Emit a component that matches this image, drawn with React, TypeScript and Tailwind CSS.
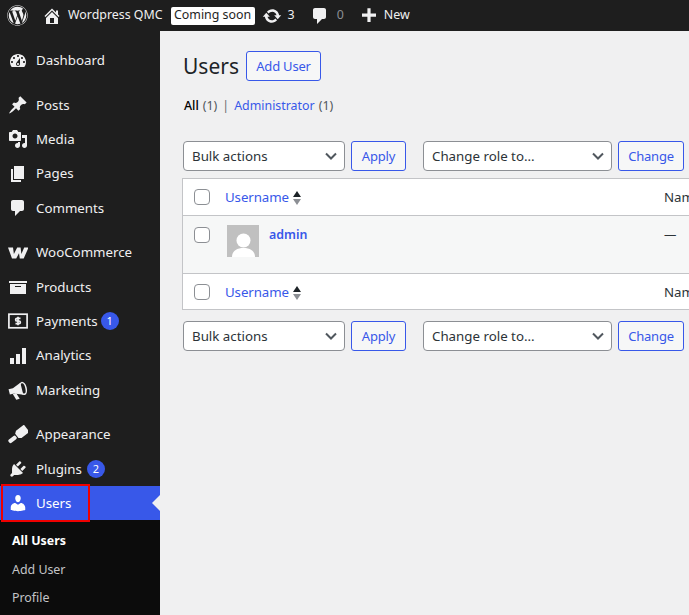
import React from "react";
import { FaWordpress } from "react-icons/fa";

const I = ({ d, className = "", children }: { d?: string; className?: string; children?: React.ReactNode }) => (
  <svg viewBox="0 0 20 20" className={`h-5 w-5 shrink-0 fill-current ${className}`}>
    {d ? <path d={d} /> : null}
    {children}
  </svg>
);

const P = {
  dashboard:
    "M3.76 16h12.48c1.1-1.37 1.76-3.11 1.76-5 0-4.42-3.58-8-8-8s-8 3.58-8 8c0 1.89.66 3.63 1.76 5zM10 4c.55 0 1 .45 1 1s-.45 1-1 1-1-.45-1-1 .45-1 1-1zM6 6c.55 0 1 .45 1 1s-.45 1-1 1-1-.45-1-1 .45-1 1-1zm8 0c.55 0 1 .45 1 1s-.45 1-1 1-1-.45-1-1 .45-1 1-1zm-5.37 5.55L12 7v6c0 1.1-.9 2-2 2s-2-.9-2-2c0-.57.24-1.08.63-1.45zM4 10c.55 0 1 .45 1 1s-.45 1-1 1-1-.45-1-1 .45-1 1-1zm12 0c.55 0 1 .45 1 1s-.45 1-1 1-1-.45-1-1 .45-1 1-1zm-5 3c0-.55-.45-1-1-1s-1 .45-1 1 .45 1 1 1 1-.45 1-1z",
  post: "M10.44 3.02l1.82-1.82 6.36 6.35-1.83 1.82c-1.05-.68-2.48-.57-3.41.36l-.75.75c-.92.93-1.04 2.35-.35 3.41l-1.83 1.82-2.41-2.41-2.8 2.79c-.42.42-3.38 2.71-3.8 2.29s1.86-3.39 2.28-3.81l2.79-2.79L4.1 9.36l1.83-1.82c1.05.69 2.48.57 3.4-.36l.75-.75c.93-.92 1.05-2.35.36-3.41z",
  media:
    "M13 11V4c0-.55-.45-1-1-1h-1.67L9 1H5L3.67 3H2c-.55 0-1 .45-1 1v7c0 .55.45 1 1 1h10c.55 0 1-.45 1-1zM7 4.5c1.38 0 2.5 1.12 2.5 2.5S8.38 9.5 7 9.5 4.5 8.38 4.5 7 5.62 4.5 7 4.5zM14 6h5v10.5c0 1.38-1.12 2.5-2.5 2.5S14 17.88 14 16.5s1.12-2.5 2.5-2.5c.17 0 .34.02.5.05V9h-3V6zm-4 8.05V13h2v3.5c0 1.38-1.12 2.5-2.5 2.5S7 17.88 7 16.5 8.12 14 9.5 14c.17 0 .34.02.5.05z",
  page: "M6 15V2h10v13H6zm-1 1h8v2H3V5h2v11z",
  comment: "M5 2h9c1.1 0 2 .9 2 2v7c0 1.1-.9 2-2 2h-2l-5 5v-5H5c-1.1 0-2-.9-2-2V4c0-1.1.9-2 2-2z",
  woo: "M0 4.500h5l.900 6.500 3.300-6.500h3.400l.800 6.500 2.800-6.500H20.500L15.700 15.500h-3.900l-.8-5.200-2.800 5.200H4z",
  archive: "M19 4v2H1V4h18zM2 7h16v10H2V7zm11 3V9H7v1h6z",
  analytics: "M2 12h4v6H2zM8 8h4v10H8zM14 2h4v16h-4z",
  plugin:
    "M13.11 4.36L9.87 7.6 8 5.73l3.24-3.24c.35-.34 1.05-.2 1.56.32.52.51.66 1.21.31 1.55zm-8 1.77l.91-1.12 9.01 9.01-1.19.84c-.71.71-2.63 1.16-3.82 1.16H6.14L4.9 17.26c-.59.59-1.54.59-2.12 0-.59-.58-.59-1.53 0-2.12l1.24-1.24v-3.88c0-1.13.4-3.19 1.09-3.89zm7.26 3.97l3.24-3.24c.34-.35 1.04-.21 1.55.31.52.51.66 1.21.31 1.55l-3.24 3.25z",
  users:
    "M10 9.25c-2.27 0-2.73-3.44-2.73-3.44C7 4.02 7.82 2 9.97 2c2.16 0 2.98 2.02 2.71 3.81 0 0-.41 3.44-2.68 3.44zm0 2.57L12.72 10c2.39 0 4.52 2.33 4.52 4.53v2.49s-3.65 1.13-7.24 1.13c-3.65 0-7.24-1.13-7.24-1.13v-2.49c0-2.25 1.94-4.48 4.47-4.48z",
  update:
    "M10.2 3.28c3.53 0 6.43 2.61 6.92 6h2.08l-3.5 4-3.5-4h2.32c-.45-1.97-2.21-3.45-4.32-3.45-1.45 0-2.73.71-3.54 1.78L4.95 5.66C6.23 4.2 8.11 3.28 10.2 3.28zm-.4 13.44c-3.52 0-6.43-2.61-6.92-6H.8l3.5-4c1.17 1.33 2.33 2.67 3.5 4H5.48c.45 1.97 2.21 3.45 4.32 3.45 1.45 0 2.73-.71 3.54-1.78l1.71 1.95c-1.28 1.46-3.15 2.38-5.25 2.38z",
  home: "M16 8.5l1.53 1.53-1.06 1.06L10 4.62l-6.47 6.47-1.06-1.06L10 2.5l4 4v-2h2v4zm-6-2.46l6 5.99V18H4v-5.97zM12 17v-5H8v5h4z",
  plus: "M17 7.500v3.200h-5.400V16H8.400v-5.300H3V7.500h5.400V2.200h3.200v5.300z",
};

const PayIcon = () => (
  <I>
    <rect x="0.900" y="3.200" width="18.200" height="13.600" fill="none" stroke="currentColor" strokeWidth="1.700" />
    <path d="M12.500 7.300H9a1.300 1.300 0 0 0 0 2.700h2a1.300 1.300 0 0 1 0 2.700H7.500M10 5.800v8.400" fill="none" stroke="currentColor" strokeWidth="1.700" />
  </I>
);

const MarketingIcon = () => (
  <I>
    <g transform="rotate(-14 10 10)">
      <path d="M1 7h4.500L14 3.500v12.500L5.500 12.500H1z" />
      <ellipse cx="15.300" cy="9.700" rx="3" ry="6" fill="none" stroke="currentColor" strokeWidth="1.500" />
      <path d="M4 12.500h3.500l2 6.500H6z" />
    </g>
  </I>
);

const AppearanceIcon = () => (
  <I>
    <g transform="rotate(-38 10 10)">
      <rect x="-1.500" y="8" width="9" height="4.200" rx="1.600" />
      <path d="M8.500 7.300L11 5.500h10v9H11l-2.500-1.800z" />
    </g>
  </I>
);

type Item = { label: string; d?: string; badge?: string; badgeMl?: string; icon?: React.ReactNode };
const groups: Item[][] = [
  [{ label: "Dashboard", d: P.dashboard }],
  [
    { label: "Posts", d: P.post },
    { label: "Media", d: P.media },
    { label: "Pages", d: P.page },
    { label: "Comments", d: P.comment },
  ],
  [
    { label: "WooCommerce", d: P.woo },
    { label: "Products", d: P.archive },
    { label: "Payments", icon: <PayIcon />, badge: "1", badgeMl: "ml-[3px]" },
    { label: "Analytics", d: P.analytics },
    { label: "Marketing", icon: <MarketingIcon /> },
  ],
  [
    { label: "Appearance", icon: <AppearanceIcon /> },
    { label: "Plugins", d: P.plugin, badge: "2", badgeMl: "ml-[5px]" },
  ],
];

const Row = ({ item }: { item: Item }) => (
  <div className="flex h-[34.4px] items-center pl-2 text-[13.3px] text-[#f0f0f1]">
    {item.icon ?? <I d={item.d} />}
    <span className="ml-2 pt-[1px]">{item.label}</span>
    {item.badge ? (
      <span className={`flex h-[18px] w-[18px] items-center justify-center rounded-full bg-[#3858e9] text-[11px] text-white ${item.badgeMl}`}>
        {item.badge}
      </span>
    ) : null}
  </div>
);

const Sidebar = () => (
  <aside className="flex w-[160px] shrink-0 flex-col bg-[#1e1e1e] pt-[12.5px]">
    {groups.map((g) => (
      <div key={g[0].label} className="mb-[10px]">
        {g.map((it) => (
          <Row key={it.label} item={it} />
        ))}
      </div>
    ))}
    <div className="relative -mt-[10px] flex h-[34px] shrink-0 items-center bg-[#3858e9] pl-2 text-[13.3px] text-white">
      <I d={P.users} />
      <span className="ml-2 pt-[2px]">Users</span>
      <span className="absolute right-0 top-[9px] h-0 w-0 border-y-[8px] border-r-[8px] border-y-transparent border-r-[#f0f0f1]" />
      <span className="absolute -top-[2px] left-[1px] h-[38px] w-[89px] border-2 border-[#f00000]" />
    </div>
    <div className="flex-1 bg-[#0c0c0c] pl-3 pt-[7px] text-[12.4px] text-[#c3c4c7]">
      <div className="flex h-[28.5px] items-center font-bold text-white">All Users</div>
      <div className="flex h-[28.5px] items-center">Add User</div>
      <div className="flex h-[28.5px] items-center">Profile</div>
    </div>
  </aside>
);

const Topbar = () => (
  <header className="flex h-[31px] shrink-0 items-center bg-[#1e1e1e] text-[12.4px] text-[#f0f0f1]">
    <FaWordpress className="ml-[7px] h-[21px] w-[21px]" />
    <I d={P.home} className="ml-[14px]" />
    <span className="ml-[6px]">Wordpress QMC</span>
    <span className="ml-[8px] flex h-[18px] w-[84px] items-center justify-center rounded-[2px] bg-white text-[#1e1e1e]">
      Coming soon
    </span>
    <I d={P.update} className="ml-[7px]" />
    <span className="ml-[6px]">3</span>
    <I d={P.comment} className="ml-[15px]" />
    <span className="ml-[7px] text-[#8c8f94]">0</span>
    <I d={P.plus} className="ml-[15px]" />
    <span className="ml-[5px]">New</span>
  </header>
);

const Chevron = () => (
  <svg viewBox="0 0 16 16" className="h-4 w-4 fill-none stroke-[#50575e] stroke-2">
    <path d="M3 5.500l5 5 5-5" />
  </svg>
);

const Select = ({ label, w }: { label: string; w: string }) => (
  <div className={`flex h-[30px] items-center justify-between rounded-[4px] border border-[#8c8f94] bg-white pl-2 pr-[5px] text-[13.3px] text-[#2c3338] ${w}`}>
    <span className="pt-[2px]">{label}</span>
    <Chevron />
  </div>
);

const Btn = ({ label, w }: { label: string; w: string }) => (
  <div className={`flex h-[30px] items-center justify-center rounded-[3px] border border-[#3858e9] bg-[#f6f7f7] pt-[2px] text-[13px] tracking-[-0.2px] text-[#3858e9] ${w}`}>
    {label}
  </div>
);

const Actions = () => (
  <div className="flex items-center pl-px">
    <Select label="Bulk actions" w="w-[162px]" />
    <div className="ml-[6px]">
      <Btn label="Apply" w="w-[55px]" />
    </div>
    <div className="ml-[17px]">
      <Select label="Change role to..." w="w-[189px]" />
    </div>
    <div className="ml-[6px]">
      <Btn label="Change" w="w-[66px]" />
    </div>
  </div>
);

const Box = () => <span className="block h-4 w-4 shrink-0 rounded-[4px] border border-[#8c8f94] bg-white" />;

const Sort = () => (
  <span className="ml-[4px] flex flex-col gap-[2px] pt-[2px]">
    <span className="h-0 w-0 border-x-[4px] border-b-[6px] border-x-transparent border-b-[#1d2327]" />
    <span className="h-0 w-0 border-x-[4px] border-t-[6px] border-x-transparent border-t-[#8c8f94]" />
  </span>
);

const HeadRow = ({ className }: { className: string }) => (
  <div className={`flex items-center bg-white pl-[11px] text-[13.3px] ${className}`}>
    <span className="flex w-[470px] items-center">
      <Box />
      <span className="ml-[15px] pt-[2px] tracking-[-0.1px] text-[#3858e9]">Username</span>
      <Sort />
    </span>
    <span className="pt-[2px] text-[#2c3338]">Name</span>
  </div>
);

const Main = () => (
  <main className="min-w-0 flex-1 overflow-hidden bg-[#f0f0f1] pl-[22px]">
    <div className="flex h-[50px] items-center pl-px pt-[20px]">
      <h1 className="w-[63px] pt-[1px] text-[21px] font-normal text-[#1d2327]">Users</h1>
      <Btn label="Add User" w="w-[75px]" />
    </div>
    <div className="mt-[15px] flex h-[20px] items-center pl-[2px] text-[12.4px] text-[#50575e]">
      <span className="font-medium text-black">All</span>
      <span className="ml-1">(1)</span>
      <span className="mx-[5px] text-[#646970]">|</span>
      <span className="text-[#3858e9]">Administrator</span>
      <span className="ml-1">(1)</span>
    </div>
    <div className="mt-[25px]">
      <Actions />
    </div>
    <div className="mt-[7px] w-[600px] border border-[#c3c4c7] bg-white">
      <HeadRow className="h-[37px] border-b border-[#c3c4c7]" />
      <div className="flex h-[58px] items-start border-b border-[#c3c4c7] bg-[#f6f7f7] pl-[11px] pt-[9px] text-[12.4px]">
        <span className="flex w-[470px] items-start">
          <span className="mt-[2px]">
            <Box />
          </span>
          <span className="ml-[17px] h-8 w-8 shrink-0 overflow-hidden bg-[#c0c0c0]">
            <svg viewBox="0 0 32 32" className="h-8 w-8 fill-white">
              <circle cx="16.500" cy="15.500" r="7" />
              <path d="M5 32c0-6 5-9 11.500-9S28 26 28 32z" />
            </svg>
          </span>
          <span className="ml-[10px] pt-[1px] font-semibold text-[#3858e9]">admin</span>
        </span>
        <span className="pt-[1px] text-[#2c3338]">—</span>
      </div>
      <HeadRow className="h-[35px]" />
    </div>
    <div className="mt-[11px]">
      <Actions />
    </div>
  </main>
);

export default function App() {
  return (
    <div className="flex h-[615px] w-[689px] flex-col overflow-hidden bg-[#f0f0f1] font-['Noto_Sans',sans-serif]">
      <Topbar />
      <div className="flex min-h-0 flex-1">
        <Sidebar />
        <Main />
      </div>
    </div>
  );
}
